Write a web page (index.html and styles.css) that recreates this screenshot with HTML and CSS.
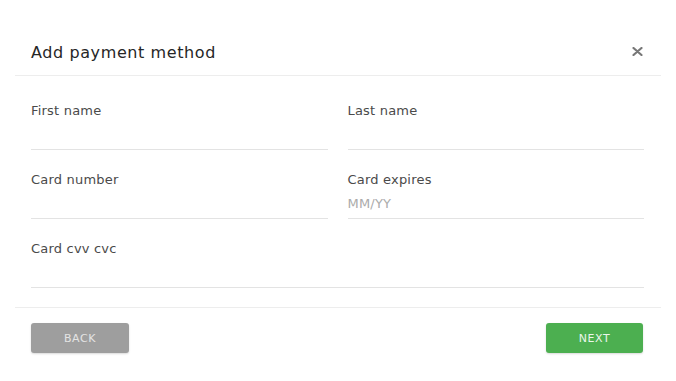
FILE: index.html
```
<!DOCTYPE html>
<html lang="en">
<head>
    <meta charset="UTF-8">
    <meta name="viewport" content="width=device-width, initial-scale=1.0">
    <title>Add payment method</title>
    <link rel="stylesheet" href="styles.css">
</head>
<body>
    <div class="dialog">
        <div class="dialog-header">
            <h1 class="dialog-title">Add payment method</h1>
            <button class="close-btn" aria-label="Close">
                <svg width="11" height="9" viewBox="0 0 11 9">
                    <path d="M1.5 1 L9.5 8 M9.5 1 L1.5 8" stroke="#777" stroke-width="2.2" stroke-linecap="round"/>
                </svg>
            </button>
        </div>

        <div class="dialog-body">
            <div class="field">
                <label class="field-label">First name</label>
                <input class="field-input" type="text">
            </div>
            <div class="field">
                <label class="field-label">Last name</label>
                <input class="field-input" type="text">
            </div>
            <div class="field">
                <label class="field-label">Card number</label>
                <input class="field-input" type="text">
            </div>
            <div class="field">
                <label class="field-label">Card expires</label>
                <input class="field-input" type="text" placeholder="MM/YY">
            </div>
            <div class="field field-wide">
                <label class="field-label">Card cvv cvc</label>
                <input class="field-input" type="text">
            </div>
        </div>

        <div class="dialog-footer">
            <button class="btn btn-back">BACK</button>
            <button class="btn btn-next">NEXT</button>
        </div>
    </div>
</body>
</html>
```

FILE: styles.css
```
body {
    margin: 0;
    background: #fff;
    font-family: "DejaVu Sans", "Liberation Sans", sans-serif;
}

.dialog {
    margin: 33px 15px 0 15px;
    background: #fff;
}

.dialog-header {
    height: 42px;
    display: flex;
    align-items: center;
    justify-content: space-between;
    padding: 0 18px 0 16px;
    border-bottom: 1px solid #ededed;
}

.dialog-title {
    margin: -3px 0 0 0;
    font-size: 16px;
    font-weight: normal;
    letter-spacing: 0.6px;
    color: #262626;
}

.close-btn {
    border: none;
    background: none;
    padding: 0;
    margin-top: -6px;
    display: flex;
    cursor: pointer;
}

.dialog-body {
    display: grid;
    grid-template-columns: 1fr 1fr;
    column-gap: 20px;
    row-gap: 22px;
    padding: 27px 17px 19px 16px;
    border-bottom: 1px solid #ededed;
}

.field {
    display: flex;
    flex-direction: column;
}

.field-wide {
    grid-column: 1 / span 2;
}

.field-label {
    font-size: 13px;
    line-height: 16px;
    letter-spacing: 0.2px;
    color: #4a4a4a;
}

.field-input {
    height: 30px;
    box-sizing: content-box;
    padding: 0;
    border: none;
    border-bottom: 1px solid #e3e3e3;
    outline: none;
    font-family: inherit;
    font-size: 13px;
    letter-spacing: 0.2px;
    color: #333;
    background: transparent;
}

.field-input::placeholder {
    color: #ababab;
}

.dialog-footer {
    display: flex;
    justify-content: space-between;
    padding: 15px 18px 14px 16px;
}

.btn {
    width: 98px;
    height: 30px;
    border: none;
    border-radius: 3px;
    font-family: inherit;
    font-size: 11px;
    letter-spacing: 0.6px;
    cursor: pointer;
    box-shadow: 0 1px 2px rgba(0, 0, 0, 0.15);
}

.btn-back {
    background: #9e9e9e;
    color: #e4e4e4;
}

.btn-next {
    width: 97px;
    background: #4caf50;
    color: #eaf6ea;
}
```
